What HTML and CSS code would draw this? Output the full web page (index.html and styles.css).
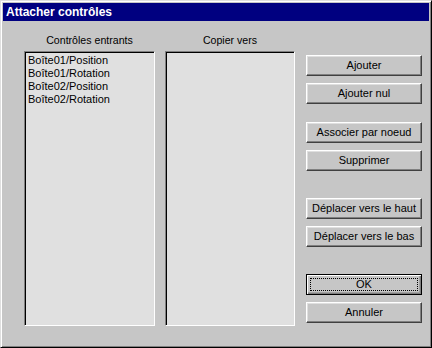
FILE: index.html
```html
<!DOCTYPE html>
<html lang="fr">
<head>
<meta charset="utf-8">
<title>Attacher contrôles</title>
<link rel="stylesheet" href="styles.css">
</head>
<body>
<div class="dialog">
  <div class="titlebar">Attacher contrôles</div>
  <div class="content">
    <div class="col col-in">
      <div class="label">Contrôles entrants</div>
      <div class="listbox">
        <div class="item">Boîte01/Position</div>
        <div class="item">Boîte01/Rotation</div>
        <div class="item">Boîte02/Position</div>
        <div class="item">Boîte02/Rotation</div>
      </div>
    </div>
    <div class="col col-out">
      <div class="label">Copier vers</div>
      <div class="listbox"></div>
    </div>
    <div class="buttons">
      <div class="group g1">
        <button class="btn">Ajouter</button>
        <button class="btn">Ajouter nul</button>
      </div>
      <div class="group g2">
        <button class="btn">Associer par noeud</button>
        <button class="btn">Supprimer</button>
      </div>
      <div class="group g3">
        <button class="btn">Déplacer vers le haut</button>
        <button class="btn">Déplacer vers le bas</button>
      </div>
      <div class="group g4">
        <button class="btn default"><span class="focus">OK</span></button>
        <button class="btn">Annuler</button>
      </div>
    </div>
  </div>
</div>
</body>
</html>
```
FILE: styles.css
```css
html, body {
  margin: 0;
  padding: 0;
  background: #c6c6c6;
}
body {
  width: 432px;
  height: 348px;
  overflow: hidden;
  font-family: "Liberation Sans", Arial, sans-serif;
  font-size: 11px;
  color: #000;
}
.dialog {
  box-sizing: border-box;
  width: 432px;
  height: 348px;
  background: #c6c6c6;
  border: 1px solid;
  border-color: #dfdfdf #000 #000 #dfdfdf;
  box-shadow: inset 1px 1px #fff, inset -1px -1px #808080;
  padding: 2px;
  display: flex;
  flex-direction: column;
}
.titlebar {
  height: 18px;
  line-height: 18px;
  background: #000080;
  color: #fff;
  font-weight: bold;
  font-size: 12px;
  padding-left: 3px;
  white-space: nowrap;
}
.content {
  display: flex;
  padding: 13px 0 0 21px;
}
.col {
  display: flex;
  flex-direction: column;
}
.col-in {
  width: 131px;
  margin-right: 10px;
}
.col-out {
  width: 130px;
  margin-right: 11px;
}
.label {
  height: 13px;
  line-height: 13px;
  text-align: center;
  font-size: 10.6px;
  margin-bottom: 4px;
  white-space: nowrap;
}
.listbox {
  box-sizing: border-box;
  height: 275px;
  background: #e0e0e0;
  border: 1px solid;
  border-color: #808080 #fff #fff #808080;
  box-shadow: inset 1px 1px #000, inset -1px -1px #dfdfdf;
  padding: 2px 3px;
}
.item {
  height: 13px;
  line-height: 13px;
  white-space: nowrap;
}
.buttons {
  width: 116px;
  display: flex;
  flex-direction: column;
  padding-top: 21px;
}
.group {
  display: flex;
  flex-direction: column;
  gap: 7px;
}
.g2 { margin-top: 18px; }
.g3 { margin-top: 27px; }
.g4 { margin-top: 27px; }
.btn {
  box-sizing: border-box;
  width: 116px;
  height: 21px;
  margin: 0;
  padding: 0;
  background: #c6c6c6;
  border: 1px solid;
  border-color: #fff #404040 #404040 #fff;
  box-shadow: inset -1px -1px #808080, inset 1px 1px #dfdfdf;
  font-family: "Liberation Sans", Arial, sans-serif;
  font-size: 11px;
  color: #000;
  text-align: center;
  line-height: 17px;
  white-space: nowrap;
  display: flex;
  align-items: center;
  justify-content: center;
}
.btn.default {
  border-color: #000;
  box-shadow: inset 1px 1px #fff, inset -1px -1px #808080, inset -2px -2px #a0a0a0;
  padding: 3px;
}
.focus {
  box-sizing: border-box;
  width: 100%;
  height: 100%;
  border: 1px dotted #000;
  display: flex;
  align-items: center;
  justify-content: center;
}
```
